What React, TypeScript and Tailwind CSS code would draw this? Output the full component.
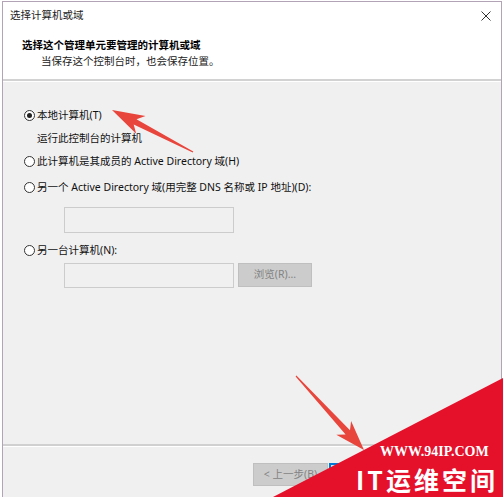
import React from "react";

const font = "font-['Noto_Sans','Noto_Sans_CJK_SC',sans-serif]";

// arrow polygon from tail to tip, computed from two points
const arrowPoints = (
  tx: number,
  ty: number,
  hx: number,
  hy: number,
  headLen: number,
  headW: number,
  shaftW: number,
  tailW: number
) => {
  const L = Math.hypot(hx - tx, hy - ty);
  const ux = (hx - tx) / L;
  const uy = (hy - ty) / L;
  const nx = -uy;
  const ny = ux;
  const bx = hx - ux * headLen;
  const by = hy - uy * headLen;
  const nb = headLen * 0.25;
  const pts = [
    [tx + nx * tailW, ty + ny * tailW],
    [bx + nx * shaftW, by + ny * shaftW],
    [bx - ux * nb + nx * headW, by - uy * nb + ny * headW],
    [hx, hy],
    [bx - ux * nb - nx * headW, by - uy * nb - ny * headW],
    [bx - nx * shaftW, by - ny * shaftW],
    [tx - nx * tailW, ty - ny * tailW],
  ];
  return pts.map((p) => `${p[0].toFixed(1)},${p[1].toFixed(1)}`).join(" ");
};

const Radio: React.FC<{ checked?: boolean; label: string }> = ({ checked, label }) => (
  <div className="flex h-4 items-center leading-4">
    <span className="flex size-[11px] items-center justify-center rounded-full border border-[#333] bg-white">
      {checked && <span className="size-[5px] rounded-full bg-[#222]" />}
    </span>
    <span className="ml-[2px] text-[#111]">{label}</span>
  </div>
);

const App: React.FC = () => {
  return (
    <div className={`relative h-[497px] w-[503px] overflow-hidden bg-white text-[10.5px] ${font}`}>
      <div className="ml-[2px] mt-[1px] flex h-[496px] w-[500px] flex-col border-l border-r border-t border-[#b3a3b6]">
        {/* title bar */}
        <div className="flex h-[28px] items-center justify-between bg-white pl-[7px] pr-[10px] text-[#222]">
          <span>选择计算机或域</span>
          <svg width="10" height="10" viewBox="0 0 10 10">
            <path d="M0.5 0.5 L9.5 9.5 M9.5 0.5 L0.5 9.5" stroke="#333" strokeWidth="1" />
          </svg>
        </div>
        {/* header */}
        <div className="flex h-[49px] flex-col bg-white pt-[7px] leading-4">
          <span className="pl-[19px] font-bold text-black">选择这个管理单元要管理的计算机或域</span>
          <span className="pl-[38px] text-[#222]">当保存这个控制台时，也会保存位置。</span>
        </div>
        <div className="h-[2px] bg-[#d2d2d2]" />
        <div className="h-px bg-white" />
        {/* body */}
        <div className="flex h-[362px] flex-col bg-[#f0f0f0] pl-[21px]">
          <div className="mt-[25px]">
            <Radio checked label="本地计算机(T)" />
          </div>
          <div className="mt-[7px] h-4 pl-[13px] leading-4 text-[#111]">运行此控制台的计算机</div>
          <div className="mt-[7px]">
            <Radio label="此计算机是其成员的 Active Directory 域(H)" />
          </div>
          <div className="mt-[10px]">
            <Radio label="另一个 Active Directory 域(用完整 DNS 名称或 IP 地址)(D):" />
          </div>
          <div className="ml-[40px] mt-[12px] h-[26px] w-[170px] border border-[#cccccc] bg-[#f0f0f0]" />
          <div className="mt-[9px]">
            <Radio label="另一台计算机(N):" />
          </div>
          <div className="ml-[40px] mt-[5px] flex gap-[4px]">
            <div className="h-[25px] w-[170px] border border-[#cccccc] bg-[#f0f0f0]" />
            <div className="flex h-[24px] w-[74px] items-center justify-center border border-[#bfbfbf] bg-[#cccccc] text-[#838383]">
              浏览(R)...
            </div>
          </div>
        </div>
        <div className="h-[2px] bg-[#d0d0d0]" />
        <div className="h-px bg-white" />
        {/* footer */}
        <div className="flex flex-1 gap-[1px] bg-[#f0f0f0] pl-[250px] pt-[16px]">
          <div className="flex h-[23px] w-[75px] items-center justify-center border border-[#bfbfbf] bg-[#cccccc] text-[#838383]">
            &lt; 上一步(B)
          </div>
          {/* next button, covered by the watermark */}
          <div className="h-[23px] w-[75px] border-2 border-[#0078d7] bg-[#e1e1e1]" />
        </div>
      </div>

      {/* annotations */}
      <svg className="pointer-events-none absolute left-0 top-0" width="503" height="497">
        <polygon points={arrowPoints(193, 152, 112, 110, 26, 10, 3, 0.6)} fill="#e8453c" />
        <polygon points={arrowPoints(296, 376, 364, 450, 24, 10, 3, 0.6)} fill="#e8453c" />
        <polygon points="273,497 503,378 503,497" fill="#e5112b" />
      </svg>
      <div className="absolute left-[380px] top-[444px] font-['Liberation_Serif',serif] text-[14px] font-bold leading-4 text-white">
        WWW.94IP.COM
      </div>
      <div className="absolute left-[356px] top-[464px] font-['Noto_Sans_CJK_SC',sans-serif] text-[25px] font-bold leading-[30px] tracking-[3px] text-white">
        IT运维空间
      </div>
    </div>
  );
};

export default App;
